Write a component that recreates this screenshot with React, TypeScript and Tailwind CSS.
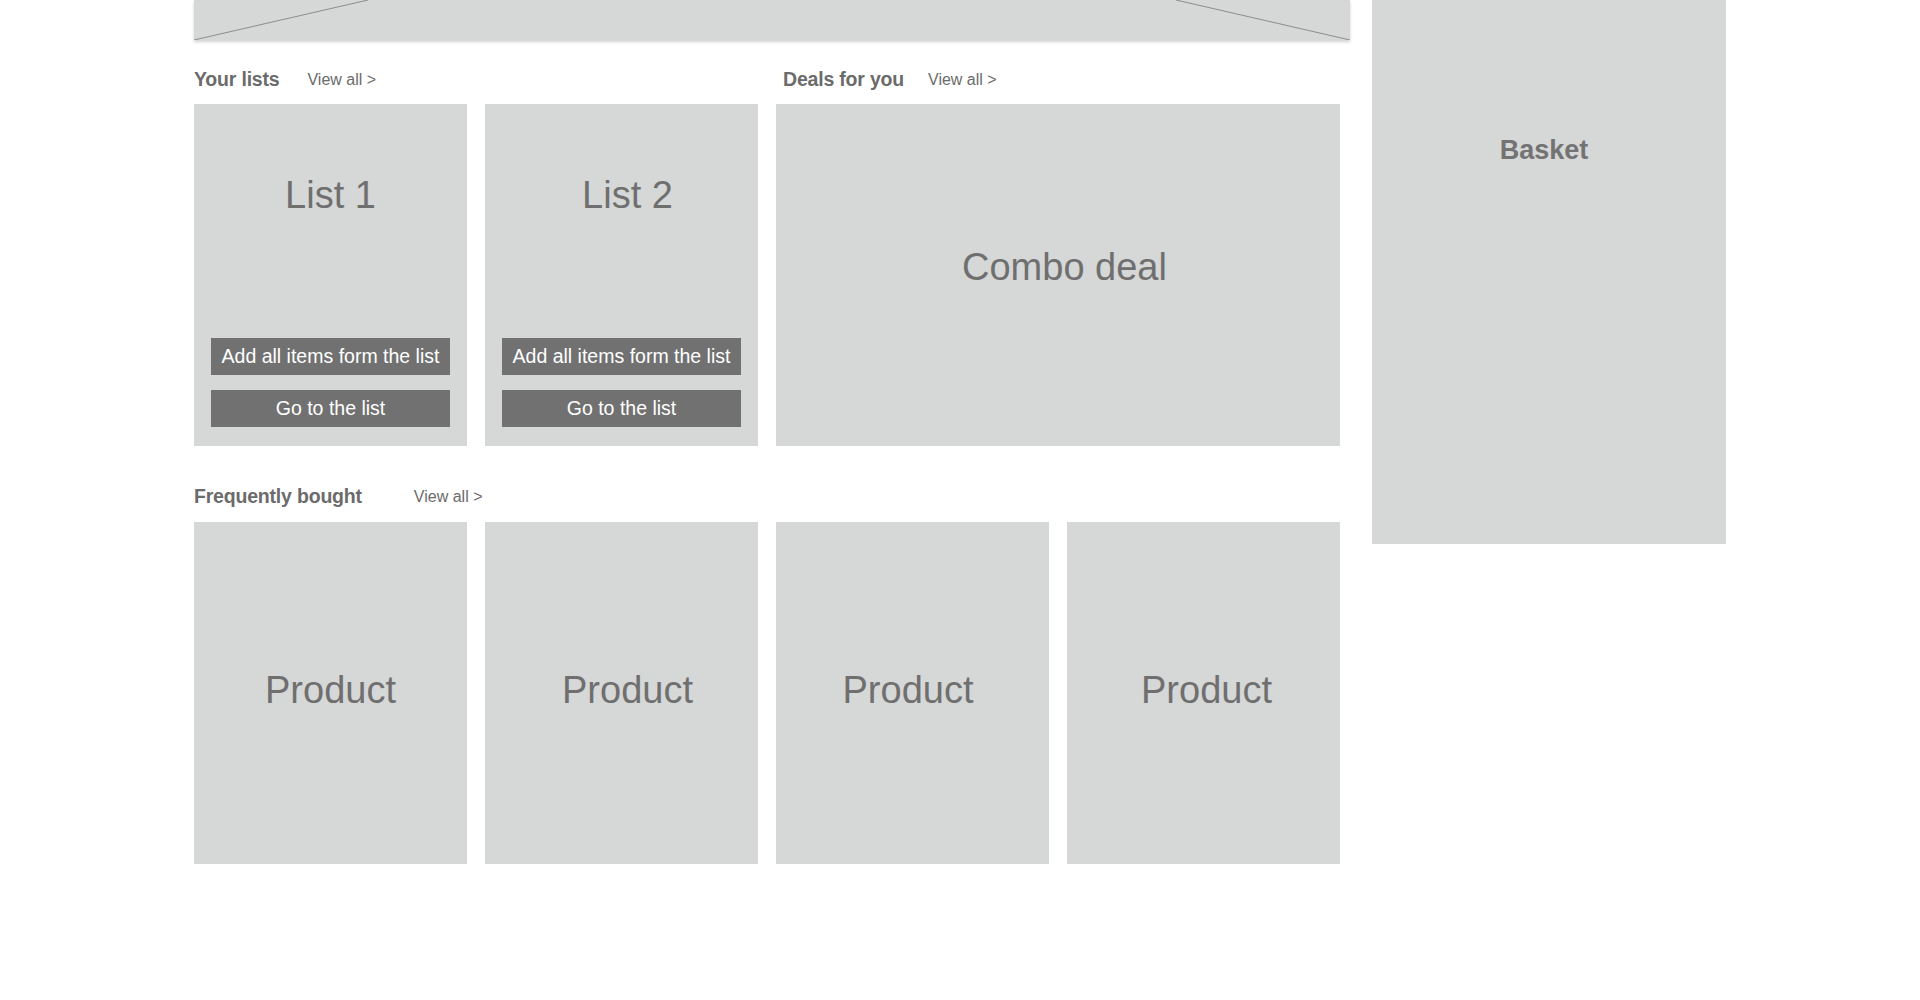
import React from "react";

const cardBg = "bg-[#d6d7d7]";

function ListCard({ title, shift }: { title: string; shift: string }) {
  return (
    <div className={`${cardBg} h-[342px] flex flex-col px-[17px] pb-[19px]`}>
      <div className={`pt-[69px] text-center text-[38px] leading-[44px] text-[#6f6f6f] ${shift}`}>{title}</div>
      <div className="mt-auto flex flex-col gap-[15px]">
        <button className="h-[37px] bg-[#717171] text-white text-[19.5px] leading-none">Add all items form the list</button>
        <button className="h-[37px] bg-[#717171] text-white text-[19.5px] leading-none">Go to the list</button>
      </div>
    </div>
  );
}

function Product({ shift }: { shift: string }) {
  return (
    <div className={`${cardBg} h-[342px] flex items-center justify-center pb-[7px] ${shift}`}>
      <span className="text-[38px] leading-[44px] text-[#6f6f6f]">Product</span>
    </div>
  );
}

function Heading({ title, gap }: { title: string; gap: string }) {
  return (
    <div className="flex items-center h-[24px]">
      <span className="text-[19.5px] font-bold text-[#6b6b6b] leading-none tracking-[-0.01em]">{title}</span>
      <span className={`text-[16px] text-[#6b6b6b] leading-none ${gap}`}>View all &gt;</span>
    </div>
  );
}

export default function App() {
  return (
    <div className="min-h-[1000px] bg-white font-['Liberation_Sans',Arial,sans-serif]">
      <div className="mx-auto w-[1532px] flex items-start gap-[22px]">
        <div className="w-[1156px] flex flex-col">
          <div className={`${cardBg} h-[40px] w-[1156px] shadow-[0_2px_3px_rgba(0,0,0,0.18)]`}>
            <svg width="1156" height="40" viewBox="0 0 1156 40" className="block">
              <line x1="0" y1="40" x2="174" y2="0" stroke="#8c8c8c" strokeWidth="1" />
              <line x1="982" y1="0" x2="1156" y2="40" stroke="#8c8c8c" strokeWidth="1" />
            </svg>
          </div>
          <div className="w-[1146px]">
            <div className="grid grid-cols-4 gap-x-[18px] mt-[28px]">
              <div className="col-span-2">
                <Heading title="Your lists" gap="ml-[28px]" />
              </div>
              <div className="col-span-2 pl-[7px]">
                <Heading title="Deals for you" gap="ml-[24px]" />
              </div>
            </div>
            <div className="grid grid-cols-4 gap-x-[18px] mt-[12px]">
              <ListCard title="List 1" shift="" />
              <ListCard title="List 2" shift="pl-[12px]" />
              <div className={`${cardBg} col-span-2 h-[342px] flex items-center justify-center pl-[13px] pb-[16px]`}>
                <span className="text-[38px] leading-[44px] text-[#6f6f6f]">Combo deal</span>
              </div>
            </div>
            <div className="mt-[39px]">
              <Heading title="Frequently bought" gap="ml-[52px]" />
            </div>
            <div className="grid grid-cols-4 gap-x-[18px] mt-[13px]">
              <Product shift="" />
              <Product shift="pl-[12px]" />
              <Product shift="pr-[9px]" />
              <Product shift="pl-[6px]" />
            </div>
          </div>
        </div>
        <div className={`${cardBg} w-[354px] h-[544px] flex justify-center pt-[135px] pr-[10px]`}>
          <span className="text-[27px] font-bold leading-[30px] text-[#737373]">Basket</span>
        </div>
      </div>
    </div>
  );
}
